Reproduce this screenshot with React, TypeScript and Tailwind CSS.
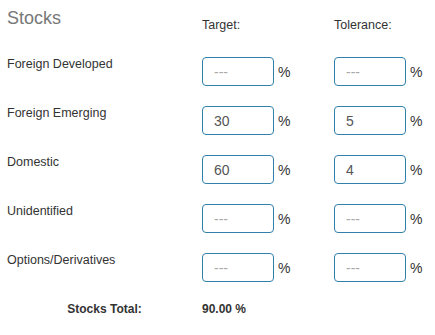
import React from "react";

const rows = [
  { label: "Foreign Developed", target: "", tolerance: "" },
  { label: "Foreign Emerging", target: "30", tolerance: "5" },
  { label: "Domestic", target: "60", tolerance: "4" },
  { label: "Unidentified", target: "", tolerance: "" },
  { label: "Options/Derivatives", target: "", tolerance: "" },
];

function PercentInput({ value }: { value: string }) {
  return (
    <div className="flex items-center self-start mt-[2px]">
      <input
        defaultValue={value}
        placeholder="---"
        className="w-[72px] h-[29px] px-[11px] rounded-[4px] border border-[#3180ab] text-[14px] text-[#555] placeholder:text-[#aaa] outline-none bg-white"
      />
      <span className="ml-[4px] text-[14px] text-[#333] mt-[1px]">%</span>
    </div>
  );
}

export default function App() {
  return (
    <div className="w-[435px] h-[335px] bg-white text-[#333] font-['Liberation_Sans',Arial,sans-serif] pl-[7px] pt-[6px]">
      <div className="grid grid-cols-[195px_132px_1fr] h-[49px] items-start">
        <div className="text-[18px] leading-[24px] text-[#777]">Stocks</div>
        <div className="text-[12.5px] leading-[18px] mt-[10px]">Target:</div>
        <div className="text-[12.5px] leading-[18px] mt-[10px]">Tolerance:</div>
      </div>

      {rows.map((r) => (
        <div key={r.label} className="grid grid-cols-[195px_132px_1fr] h-[49px] items-start">
          <div className="text-[12.5px] leading-[18px]">{r.label}</div>
          <PercentInput value={r.target} />
          <PercentInput value={r.tolerance} />
        </div>
      ))}

      <div className="grid grid-cols-[195px_132px_1fr] text-[12px] leading-[18px] font-bold">
        <div className="text-center">Stocks Total:</div>
        <div>90.00 %</div>
      </div>
    </div>
  );
}
